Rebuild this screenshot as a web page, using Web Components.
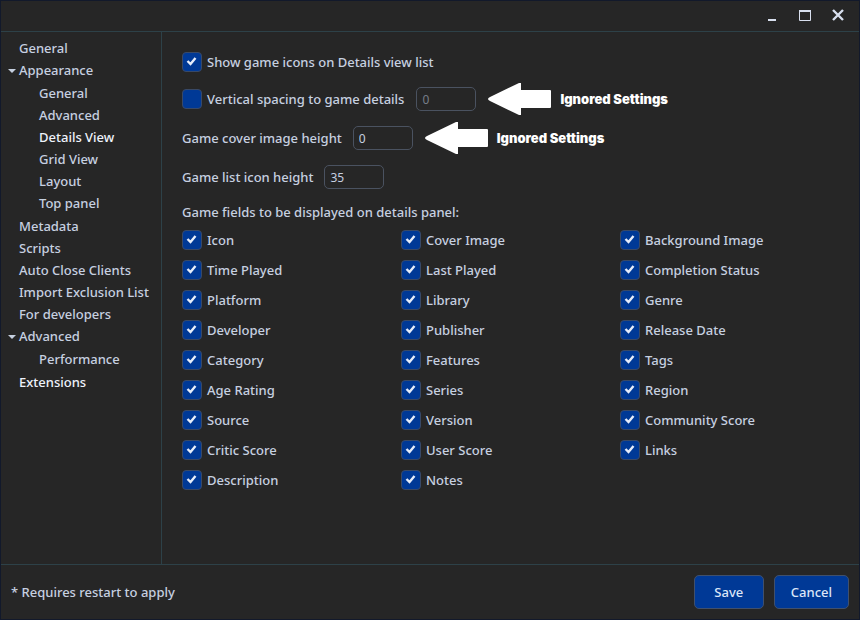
<!DOCTYPE html>
<html lang="en">
<head>
<meta charset="utf-8">
<title>Settings</title>
<style>
  html, body { margin: 0; min-height: 100%; background: #262626; }
  body {
    --text: #c6d0e0; --line: #2d4148; --edge: #4a5260; --blue: #003996;
    color: var(--text);
    font: 500 13px/20px "Noto Sans", sans-serif;
  }
</style>
</head>
<body>
<settings-window>
  <title-bar slot="title"></title-bar>
  <settings-nav slot="nav"></settings-nav>
  <details-page></details-page>
  <settings-footer slot="footer">* Requires restart to apply</settings-footer>
</settings-window>

<script>
class Base extends HTMLElement {
  constructor() {
    super();
    this.attachShadow({ mode: 'open' });
  }
  draw(html) { this.shadowRoot.innerHTML = html; }
}

customElements.define('settings-window', class extends Base {
  connectedCallback() {
    this.draw(`<style>
      :host { display: flex; flex-direction: column; min-height: 100vh; box-sizing: border-box; border: 1px solid #12192b; background: #262626; }
      .middle { flex: 1; display: flex; border: solid var(--line); border-width: 1px 0; }
      main { flex: 1; min-width: 0; }
    </style>
    <slot name="title"></slot>
    <div class="middle"><slot name="nav"></slot><main><slot></slot></main></div>
    <slot name="footer"></slot>`);
  }
});

customElements.define('title-bar', class extends Base {
  connectedCallback() {
    this.draw(`<style>
      :host { display: flex; justify-content: flex-end; height: 30px; padding-right: 5px; }
      button { width: 33px; height: 28px; padding: 0; border: 0; background: none; color: #d8dfee; display: grid; place-items: center; }
      svg { display: block; fill: none; stroke: currentColor; }
    </style>
    <button aria-label="Minimize"><svg width="14" height="14"><path d="M3 12H11" stroke-width="2"/></svg></button>
    <button aria-label="Maximize"><svg width="14" height="14"><path d="M1.5 2V12.5H12.5V2" /><path d="M1 3H13" stroke-width="2"/></svg></button>
    <button aria-label="Close"><svg width="14" height="14"><path d="M2 2L12 12M12 2L2 12" stroke-width="2.4"/></svg></button>`);
  }
});

customElements.define('settings-nav', class extends Base {
  connectedCallback() {
    const tree = [
      ['General'],
      ['Appearance', ['General', 'Advanced', 'Details View', 'Grid View', 'Layout', 'Top panel']],
      ['Metadata'], ['Scripts'], ['Auto Close Clients'], ['Import Exclusion List'], ['For developers'],
      ['Advanced', ['Performance']],
      ['Extensions']
    ];
    const bright = ['Details View', 'Extensions'];
    const link = t => `<a href="#"${bright.includes(t) ? ' class="on"' : ''}>${t}</a>`;
    const caret = '<svg width="9" height="5" aria-hidden="true"><path d="M1 1H9L5 5Z" fill="currentColor"/></svg>';
    this.draw(`<style>
      :host { display: block; flex: none; width: 160px; box-sizing: content-box; border-right: 1px solid var(--line); }
      ul { list-style: none; margin: 0; padding: 0; }
      nav > ul { padding: 5px 0 0 6px; }
      ul ul { padding: 1px 0 1px 32px; }
      .row { display: grid; grid-template-columns: 12px 1fr; align-items: center; }
      a { grid-column: 2; display: block; line-height: 22px; color: inherit; text-decoration: none; white-space: nowrap; }
      .on { color: #eef2fb; }
    </style>
    <nav aria-label="Settings sections"><ul>${tree.map(([t, kids]) =>
      `<li><div class="row">${kids ? caret : ''}${link(t)}</div>${kids ? `<ul>${kids.map(k => `<li>${link(k)}</li>`).join('')}</ul>` : ''}</li>`).join('')}</ul></nav>`);
  }
});

customElements.define('check-field', class extends Base {
  connectedCallback() {
    const checked = this.hasAttribute('checked') ? 'checked' : '';
    this.draw(`<style>
      :host { display: block; }
      label { display: flex; align-items: center; gap: 5px; white-space: nowrap; }
      .box { flex: none; display: grid; width: 20px; height: 20px; }
      input, svg { grid-area: 1 / 1; }
      input { appearance: none; margin: 0; box-sizing: border-box; width: 20px; height: 20px; border: 1px solid #394966; border-radius: 4px; background: var(--blue); }
      svg { width: 20px; height: 20px; pointer-events: none; visibility: hidden; }
      input:checked + svg { visibility: visible; }
    </style>
    <label><span class="box"><input type="checkbox" ${checked}><svg viewBox="0 0 20 20"><path d="M5.5 9L8.5 12L13.5 6" fill="none" stroke="#e6edfa" stroke-width="2.4"/></svg></span><slot></slot></label>`);
  }
});

customElements.define('number-field', class extends Base {
  connectedCallback() {
    const label = this.getAttribute('label');
    this.draw(`<style>
      :host { display: block; }
      label { display: flex; align-items: center; gap: 11px; white-space: nowrap; }
      input { box-sizing: border-box; width: 60px; height: 24px; padding: 0 5px; border: 1px solid var(--edge); border-radius: 5px; background: none; color: inherit; font: 12px/20px "Noto Sans", sans-serif; }
      input:disabled { color: #777e89; }
    </style>
    <label>${label ? `<span>${label}</span>` : ''}<input type="text" inputmode="numeric" value="${this.getAttribute('value')}" ${this.hasAttribute('disabled') ? 'disabled' : ''} ${label ? '' : 'aria-label="Vertical spacing"'}></label>`);
  }
});

customElements.define('arrow-note', class extends Base {
  connectedCallback() {
    this.draw(`<style>
      :host { display: flex; align-items: center; gap: 8px; height: 24px; color: #fff; font: 900 13px/20px Inter, sans-serif; white-space: nowrap; }
      svg { flex: none; display: block; }
    </style>
    <svg width="64" height="34" aria-hidden="true"><path d="M0 17Q0 16 2 15L31 1H33V8H62Q63 8 63 9V25Q63 26 62 26H33V33H31L2 19Q0 18 0 17Z" fill="#fff"/></svg><slot></slot>`);
  }
});

customElements.define('details-page', class extends Base {
  connectedCallback() {
    const fields = ['Icon', 'Cover Image', 'Background Image', 'Time Played', 'Last Played', 'Completion Status',
      'Platform', 'Library', 'Genre', 'Developer', 'Publisher', 'Release Date', 'Category', 'Features', 'Tags',
      'Age Rating', 'Series', 'Region', 'Source', 'Version', 'Community Score', 'Critic Score', 'User Score', 'Links',
      'Description', 'Notes'];
    this.draw(`<style>
      :host { display: flex; flex-direction: column; gap: 15px; padding: 20px; }
      .row { display: flex; align-items: center; gap: 12px; }
      section { display: grid; gap: 10px; }
      h2 { margin: 0; font: inherit; line-height: 16px; }
      .grid { display: grid; grid-template-columns: repeat(3, 1fr); row-gap: 10px; }
    </style>
    <check-field checked>Show game icons on Details view list</check-field>
    <div class="row"><check-field>Vertical spacing to game details</check-field><number-field value="0" disabled></number-field><arrow-note>Ignored Settings</arrow-note></div>
    <div class="row"><number-field label="Game cover image height" value="0"></number-field><arrow-note>Ignored Settings</arrow-note></div>
    <number-field label="Game list icon height" value="35"></number-field>
    <section><h2>Game fields to be displayed on details panel:</h2>
    <div class="grid">${fields.map(f => `<check-field checked>${f}</check-field>`).join('')}</div></section>`);
  }
});

customElements.define('settings-footer', class extends Base {
  connectedCallback() {
    this.draw(`<style>
      :host { display: flex; align-items: center; gap: 10px; padding: 10px; }
      .note { flex: 1; }
      button { height: 34px; padding: 0 16px; min-width: 70px; border: 1px solid #40506c; border-radius: 5px; background: var(--blue); color: #dce6f8; font: inherit; }
    </style>
    <span class="note"><slot></slot></span><button>Save</button><button>Cancel</button>`);
  }
});
</script>
</body>
</html>
